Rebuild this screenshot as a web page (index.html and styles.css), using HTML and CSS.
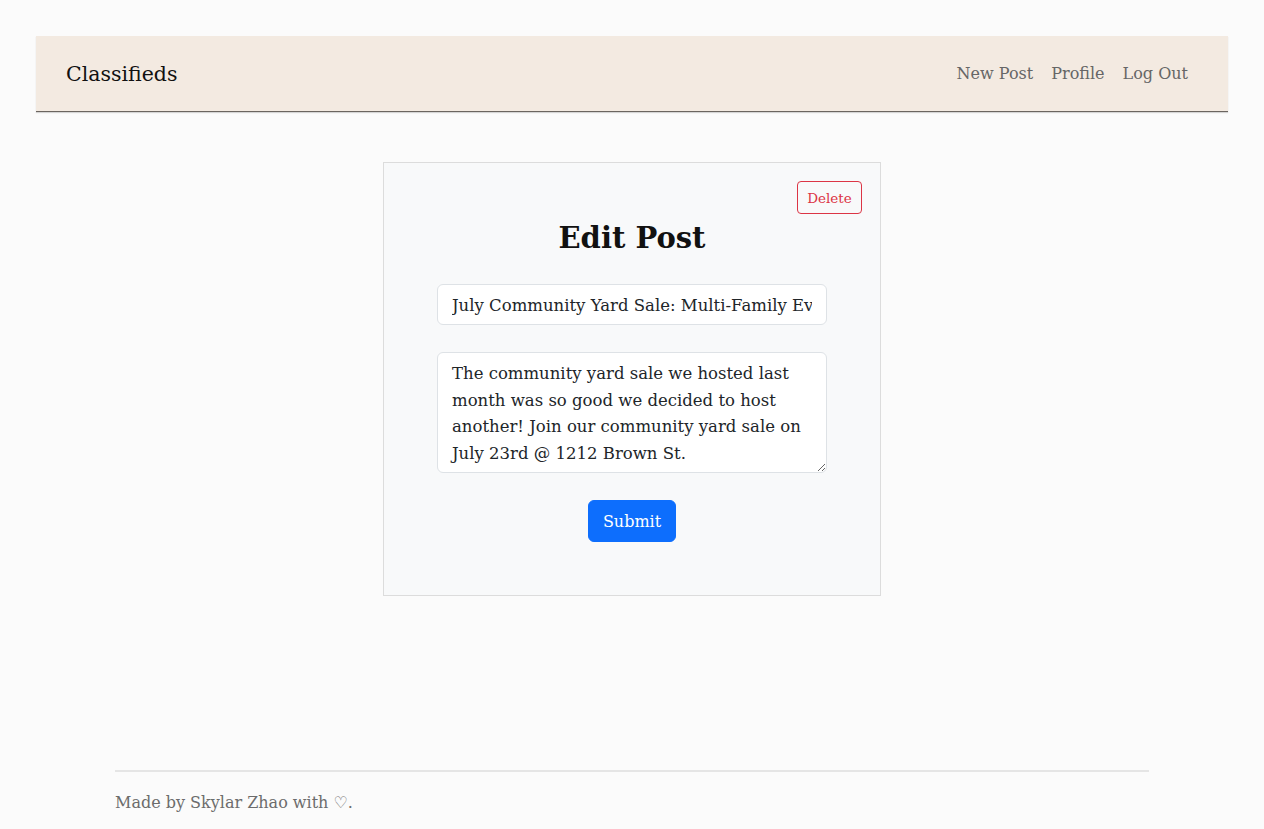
FILE: index.html
```html
<!DOCTYPE html>
<html>
<head>
<meta charset="utf-8">
<link rel="stylesheet" href="styles.css">
</head>
<body>
<div class="page">
  <nav class="navbar">
    <a class="brand">Classifieds</a>
    <div class="nav-links">
      <a>New Post</a>
      <a>Profile</a>
      <a>Log Out</a>
    </div>
  </nav>
  <main class="main">
    <div class="card">
      <div class="card-top"><button class="btn-delete">Delete</button></div>
      <h1 class="title">Edit Post</h1>
      <form class="form">
        <input class="field" type="text" value="July Community Yard Sale: Multi-Family Event">
        <textarea class="field area">The community yard sale we hosted last month was so good we decided to host another! Join our community yard sale on July 23rd @ 1212 Brown St.</textarea>
        <button class="btn-submit" type="button">Submit</button>
      </form>
    </div>
  </main>
  <footer class="footer">
    <p>Made by Skylar Zhao with ♡.</p>
  </footer>
</div>
</body>
</html>
```
FILE: styles.css
```css
* { box-sizing: border-box; }
html, body { margin: 0; padding: 0; }
body {
  background: #fbfbfb;
  font-family: "DejaVu Serif", "Liberation Serif", serif;
  color: #212529;
}
.page {
  padding: 36px 36px 0 36px;
  min-height: 829px;
  display: flex;
  flex-direction: column;
}
.navbar {
  height: 76px;
  background: #f3eae1;
  border-bottom: 1px solid #6b6560;
  box-shadow: 0 1px 1px rgba(0,0,0,0.15);
  display: flex;
  align-items: center;
  justify-content: space-between;
  padding: 0 40px 0 30px;
}
.brand {
  font-size: 20.5px;
  color: #111;
}
.nav-links { display: flex; gap: 18px; }
.nav-links a { font-size: 16px; color: #666; }
.main {
  display: flex;
  justify-content: center;
  padding-top: 50px;
  flex: 1;
}
.card {
  width: 498px;
  height: 434px;
  background: #f8f9fa;
  border: 1px solid #dcdcdc;
  padding: 18px 18px 0 18px;
  display: flex;
  flex-direction: column;
  align-items: center;
}
.card-top { align-self: stretch; display: flex; justify-content: flex-end; height: 33px; }
.btn-delete {
  font-family: inherit;
  font-size: 13.5px;
  color: #dc3545;
  background: transparent;
  border: 1px solid #dc3545;
  border-radius: 4px;
  width: 65px;
  height: 33px;
  padding: 0;
}
.title {
  margin: 0;
  font-size: 29px;
  font-weight: bold;
  color: #111;
  line-height: 48px;
}
.form {
  margin-top: 22px;
  display: flex;
  flex-direction: column;
  align-items: center;
  gap: 27px;
}
.field {
  width: 390px;
  font-family: inherit;
  font-size: 16.5px;
  color: #212529;
  background: #fff;
  border: 1px solid #dee2e6;
  border-radius: 6px;
  padding: 9px 14px 8px 14px;
  height: 41px;
}
.area {
  height: 121px;
  line-height: 26.5px;
  padding: 8px 14px;
  resize: vertical;
  overflow: hidden;
}
.btn-submit {
  margin-top: 0;
  font-family: inherit;
  font-size: 16px;
  color: #fff;
  background: #0d6efd;
  border: 1px solid #0d6efd;
  border-radius: 6px;
  width: 88px;
  height: 42px;
}
.footer {
  margin: 0 79px;
  border-top: 2px solid #e5e5e5;
  height: 59px;
  padding-top: 21px;
}
.footer p {
  margin: 0;
  font-size: 16px;
  color: #6c6c6c;
}
```
